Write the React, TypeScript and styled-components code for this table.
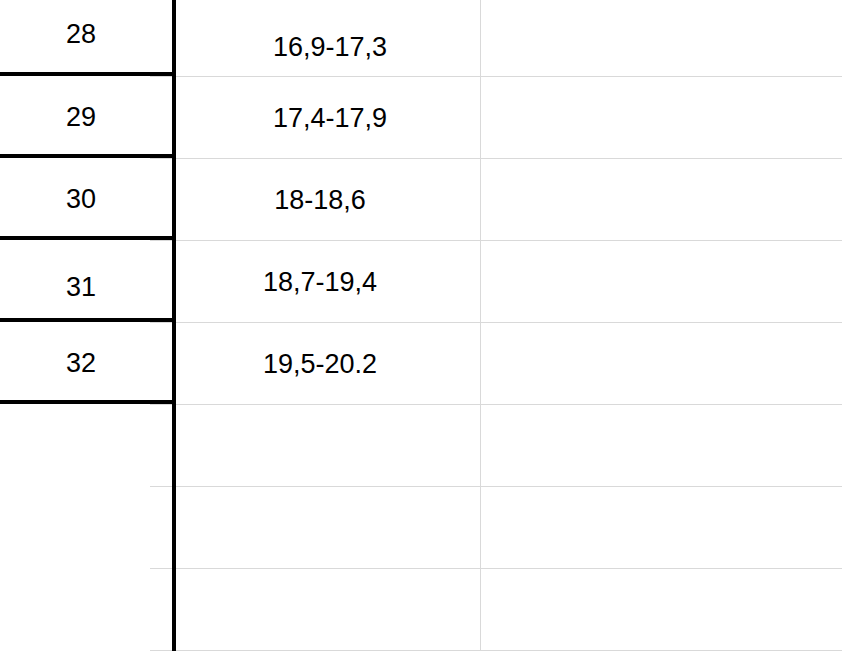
import styled, { createGlobalStyle } from 'styled-components';

const GlobalStyle = createGlobalStyle`
    html, body {
        margin: 0;
        padding: 0;
        background: #ffffff;
        overflow: hidden;
    }
    body {
        font-family: "Liberation Sans", Arial, sans-serif;
        color: #000000;
    }
`;

type SizeRow = {
    size?: string;
    range?: string;
    sizeShift?: number;
    rangeShift?: number;
    rangeNudge?: number;
};

const rows: SizeRow[] = [
    { size: '28', range: '16,9-17,3', sizeShift: -1, rangeShift: 11, rangeNudge: 10 },
    { size: '29', range: '17,4-17,9', rangeNudge: 10 },
    { size: '30', range: '18-18,6' },
    { size: '31', range: '18,7-19,4', sizeShift: 6 },
    { size: '32', range: '19,5-20.2' },
    {},
    {},
    {},
];

const Sheet = styled.div`
    display: flex;
    flex-direction: column;
    width: 842px;
    height: 651px;
    overflow: hidden;
`;

const Rows = styled.div`
    display: flex;
    flex-direction: column;
    margin-top: -5px;
`;

const Row = styled.div`
    display: grid;
    grid-template-columns: 176px 305px 1fr;
    height: 82px;
`;

const LeftCell = styled.div`
    display: flex;
    flex-direction: column;
    border-right: 4px solid #000000;
    box-sizing: border-box;
`;

const Label = styled.div<{ $ruled: boolean; $shift: number }>`
    flex: 1;
    display: flex;
    align-items: center;
    justify-content: center;
    padding: ${(p) => Math.max(4 + p.$shift * 2, 0)}px 14px 0 0;
    border-bottom: ${(p) => (p.$ruled ? '4px solid #000000' : '4px solid transparent')};
    margin-right: -4px;
    font-size: 27px;
    line-height: 1;
`;

const Stub = styled.div`
    height: 1px;
    margin-left: 150px;
    background: #d9d9d9;
`;

const ValueCell = styled.div<{ $shift: number; $nudge: number }>`
    display: flex;
    align-items: center;
    justify-content: center;
    box-sizing: border-box;
    padding: ${(p) => 2 + p.$shift * 2}px 16px 0 ${(p) => p.$nudge * 2}px;
    border-right: 1px solid #d9d9d9;
    border-bottom: 1px solid #d9d9d9;
    font-size: 27px;
    line-height: 1;
`;

const EmptyCell = styled.div`
    border-bottom: 1px solid #d9d9d9;
`;

export default function App() {
    return (
        <>
            <GlobalStyle />
            <Sheet>
                <Rows>
                    {rows.map((row, i) => (
                        <Row key={i}>
                            <LeftCell>
                                <Label $ruled={!!row.size} $shift={row.sizeShift ?? 0}>
                                    {row.size}
                                </Label>
                                <Stub />
                            </LeftCell>
                            <ValueCell $shift={row.rangeShift ?? 0} $nudge={row.rangeNudge ?? 0}>
                                {row.range}
                            </ValueCell>
                            <EmptyCell />
                        </Row>
                    ))}
                </Rows>
            </Sheet>
        </>
    );
}
